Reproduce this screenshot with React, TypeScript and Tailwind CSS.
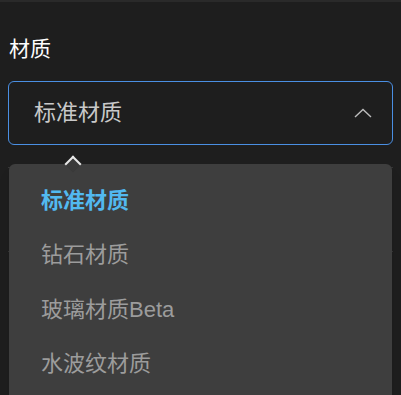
import { useState } from 'react'

const materials = ['标准材质', '钻石材质', '玻璃材质Beta', '水波纹材质']

const font = { fontFamily: '"Liberation Sans", "Noto Sans CJK SC", sans-serif' }

export default function App() {
  const [selected, setSelected] = useState(materials[0])

  return (
    <div className="relative h-[395px] w-full overflow-hidden bg-[#1e1e1e] border-t-2 border-[#2a2a2a]" style={font}>
      <div className="px-2 pt-[33px]">
        <div className="text-[21px] leading-7 text-white pl-px">材质</div>
        <button
          type="button"
          className="mt-[18px] flex h-16 w-full items-center justify-between rounded-md border border-[#4a8fe3] pl-[25px] pr-5 text-left"
        >
          <span className="text-[22px] leading-7 text-[#c9c9c9]">{selected}</span>
          <svg width="18" height="10" viewBox="0 0 18 10" fill="none">
            <path d="M1 9L9 1.5L17 9" stroke="#bdbdbd" strokeWidth="1.4" />
          </svg>
        </button>
        {/* content underneath the open menu */}
        <div className="mt-[22px] h-px bg-[#363636]" />
        <div className="mt-[83px] h-px bg-[#363636]" />
      </div>

      {/* open menu */}
      <div className="absolute left-[9px] right-[9px] top-[162px] h-[260px] rounded-t-md bg-[#3e3e3e] pt-[9px] shadow-lg">
        <div className="absolute -top-[6px] left-[58px] h-3 w-3 rotate-45 border-l-2 border-t-2 border-[#e6e6e6] bg-[#3a3a3a]" />
        {materials.map((m) => (
          <div
            key={m}
            onClick={() => setSelected(m)}
            className={
              m === selected
                ? 'flex h-[54.5px] items-center pl-8 text-[22px] font-bold text-[#52b9f0]'
                : 'flex h-[54.5px] items-center pl-8 text-[22px] text-[#9c9c9c]'
            }
          >
            {m}
          </div>
        ))}
      </div>
    </div>
  )
}
